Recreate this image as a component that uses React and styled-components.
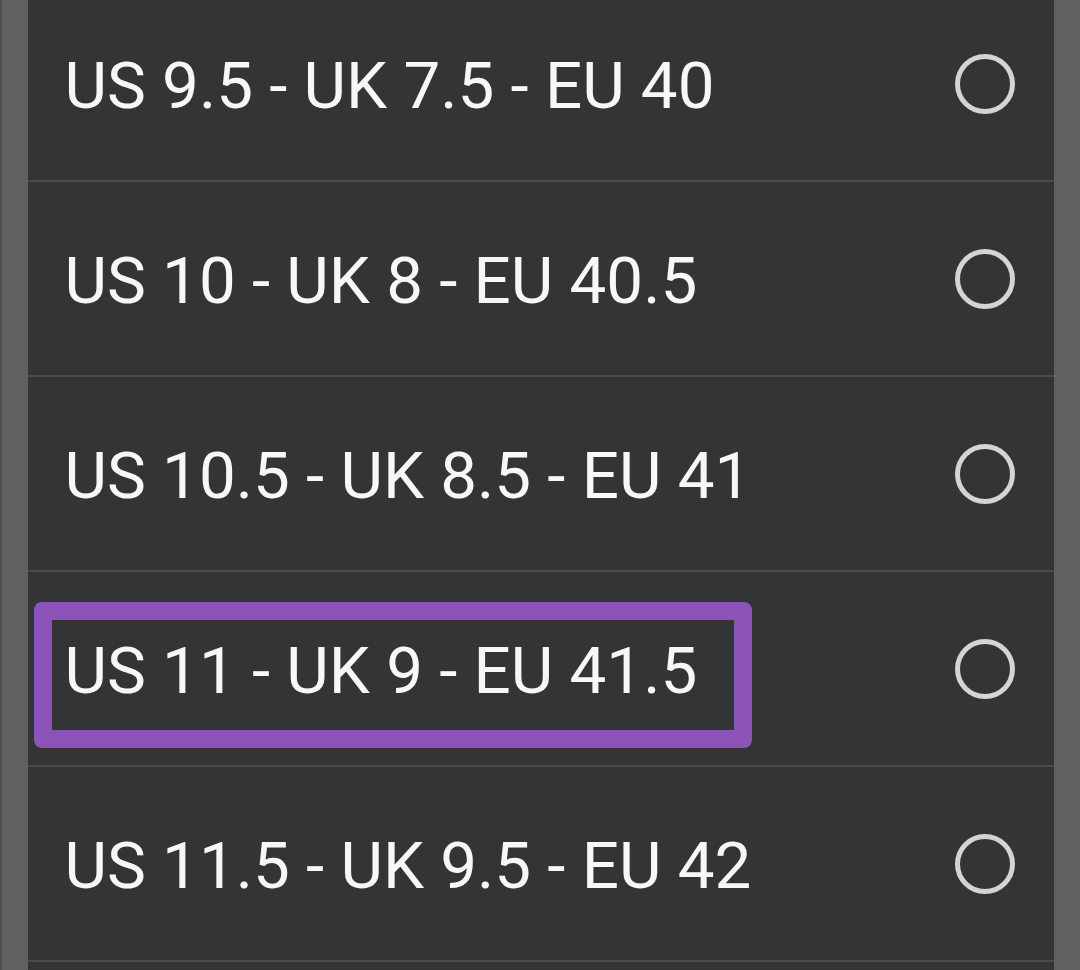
import React from 'react'
import styled, { createGlobalStyle } from 'styled-components'

const GlobalStyle = createGlobalStyle`
  html, body {
    margin: 0;
    padding: 0;
    background: #606060;
    overflow: hidden;
  }
  body {
    font-family: Roboto, "Liberation Sans", sans-serif;
  }
`;

const sizes = [
  'US 9.5 - UK 7.5 - EU 40',
  'US 10 - UK 8 - EU 40.5',
  'US 10.5 - UK 8.5 - EU 41',
  'US 11 - UK 9 - EU 41.5',
  'US 11.5 - UK 9.5 - EU 42',
];

function App() {
  return (
    <>
      <GlobalStyle />
      <Screen>
        <Sheet>
          <List>
            {sizes.map((label, i) => (
              <Row key={label}>
                <Label>{label}</Label>
                <Radio />
                {i === 3 && <Highlight />}
              </Row>
            ))}
          </List>
        </Sheet>
      </Screen>
    </>
  );
}

const Screen = styled.div`
  width: 1080px;
  height: 970px;
  display: flex;
  justify-content: center;
  background: #606060;
  border-left: 2px solid #4c4c4c;
  box-sizing: border-box;
  overflow: hidden;
`;

const Sheet = styled.div`
  width: 1026px;
  margin-left: -1px;
  background: #333436;
  height: 100%;
  overflow: hidden;
`;

const List = styled.div`
  margin-top: -13px;
  display: flex;
  flex-direction: column;
`;

const Row = styled.div`
  position: relative;
  height: 193px;
  flex-shrink: 0;
  border-bottom: 2px solid #4a4b4d;
  display: flex;
  align-items: center;
  justify-content: space-between;
  padding: 0 39px 0 37px;
`;

const Label = styled.span`
  font-size: 65.5px;
  color: #f7f7f7;
  line-height: 1;
  margin-top: 5px;
`;

const Radio = styled.span`
  width: 50px;
  height: 50px;
  border-radius: 50%;
  border: 5px solid #d4d4d4;
`;

const Highlight = styled.div`
  position: absolute;
  left: 6px;
  top: 30px;
  width: 682px;
  height: 110px;
  border: 18px solid #8e53b9;
  border-radius: 8px;
  pointer-events: none;
`;

export default App;
